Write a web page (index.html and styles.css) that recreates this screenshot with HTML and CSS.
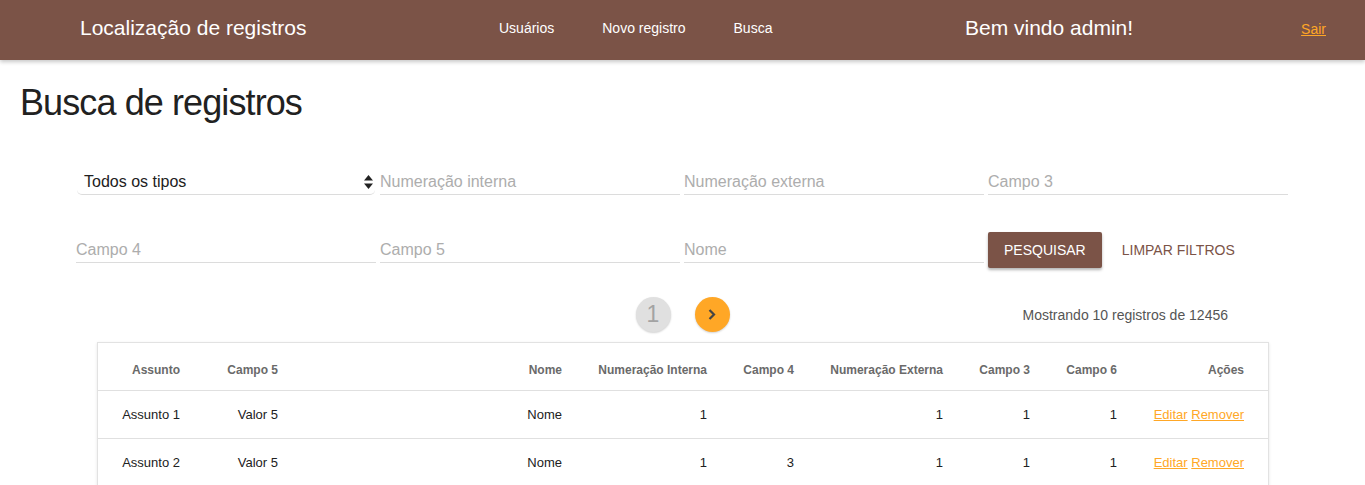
FILE: index.html
```html
<!DOCTYPE html>
<html lang="pt-BR">
<head>
<meta charset="utf-8">
<title>Busca de registros</title>
<link rel="stylesheet" href="styles.css">
</head>
<body>
<nav class="topbar">
  <div class="brand">Localização de registros</div>
  <ul class="nav-links">
    <li><a href="#">Usuários</a></li>
    <li><a href="#">Novo registro</a></li>
    <li><a href="#">Busca</a></li>
  </ul>
  <div class="welcome">Bem vindo admin!</div>
  <a class="logout" href="#">Sair</a>
</nav>

<main>
  <h1 class="page-title">Busca de registros</h1>

  <div class="filters">
    <div class="field select-field">
      <span>Todos os tipos</span>
      <svg class="select-arrows" width="9" height="14" viewBox="0 0 9 14"><polygon points="4.5,0 9,5.5 0,5.5" fill="#222"/><polygon points="0,8.5 9,8.5 4.5,14" fill="#222"/></svg>
    </div>
    <div class="field placeholder">Numeração interna</div>
    <div class="field placeholder">Numeração externa</div>
    <div class="field placeholder">Campo 3</div>

    <div class="field placeholder">Campo 4</div>
    <div class="field placeholder">Campo 5</div>
    <div class="field placeholder">Nome</div>
    <div class="actions">
      <button class="btn">PESQUISAR</button>
      <button class="btn-flat">LIMPAR FILTROS</button>
    </div>
  </div>

  <div class="pager-row">
    <div></div>
    <div class="pager">
      <span class="page-circle page-current">1</span>
      <span class="page-circle page-next">
        <svg width="8" height="11" viewBox="0 0 8 11"><polyline points="1.5,1 6,5.5 1.5,10" fill="none" stroke="#444" stroke-width="2.2"/></svg>
      </span>
    </div>
    <div class="count">Mostrando 10 registros de 12456</div>
  </div>

  <div class="card">
    <table class="results">
      <colgroup>
        <col class="c-assunto"><col class="c-campo5"><col class="c-nome"><col class="c-numint"><col class="c-campo4"><col class="c-numext"><col class="c-campo3"><col class="c-campo6"><col class="c-acoes">
      </colgroup>
      <thead>
        <tr>
          <th>Assunto</th><th>Campo 5</th><th>Nome</th><th>Numeração Interna</th><th>Campo 4</th><th>Numeração Externa</th><th>Campo 3</th><th>Campo 6</th><th class="last">Ações</th>
        </tr>
      </thead>
      <tbody>
        <tr>
          <td>Assunto 1</td><td>Valor 5</td><td>Nome</td><td>1</td><td></td><td>1</td><td>1</td><td>1</td><td class="last"><a href="#">Editar</a> <a href="#">Remover</a></td>
        </tr>
        <tr>
          <td>Assunto 2</td><td>Valor 5</td><td>Nome</td><td>1</td><td>3</td><td>1</td><td>1</td><td>1</td><td class="last"><a href="#">Editar</a> <a href="#">Remover</a></td>
        </tr>
      </tbody>
    </table>
  </div>
</main>
</body>
</html>
```

FILE: styles.css
```css
* { box-sizing: border-box; }

html, body {
  margin: 0;
  padding: 0;
  background: #fff;
  font-family: "Liberation Sans", Arial, sans-serif;
  color: #212121;
}

/* ---------- top bar ---------- */
.topbar {
  height: 60px;
  padding: 0 39px 5px 80px;
  background: #7b5347;
  display: flex;
  align-items: center;
  box-shadow: 0 2px 4px rgba(0, 0, 0, 0.22);
  color: #fff;
}

.brand {
  width: 419px;
  font-size: 21px;
  white-space: nowrap;
}

.nav-links {
  list-style: none;
  margin: 0;
  padding: 0;
  width: 466px;
  display: flex;
  gap: 48px;
}

.nav-links a {
  color: #fff;
  text-decoration: none;
  font-size: 14px;
}

.welcome {
  font-size: 21px;
  white-space: nowrap;
}

.logout {
  margin-left: auto;
  color: #ffa726;
  font-size: 14px;
  text-decoration: underline;
  position: relative;
  top: 1px;
}

/* ---------- title ---------- */
.page-title {
  margin: 23px 0 0 20px;
  font-size: 36px;
  line-height: 40px;
  font-weight: normal;
  letter-spacing: -0.9px;
  color: #212121;
}

/* ---------- filters ---------- */
.filters {
  margin: 46px 0 0 76px;
  display: grid;
  grid-template-columns: repeat(4, 300px);
  column-gap: 4px;
  row-gap: 37px;
  align-items: center;
}

.field {
  height: 26px;
  line-height: 25px;
  font-size: 16px;
  border-bottom: 1px solid #dcdcdc;
  white-space: nowrap;
}

.placeholder {
  color: #adadad;
}

.select-field {
  display: flex;
  align-items: center;
  justify-content: space-between;
  margin-left: 1px;
  margin-right: 1px;
  padding: 0 2px 0 7px;
  color: #212121;
  border-radius: 0 0 5px 5px;
}

.select-arrows {
  display: block;
  flex: none;
}

.actions {
  display: flex;
  align-items: center;
  white-space: nowrap;
}

.btn {
  height: 36px;
  padding: 0 16px;
  border: none;
  border-radius: 2px;
  background: #7b5347;
  color: #fff;
  font-family: inherit;
  font-size: 14px;
  box-shadow: 0 2px 3px rgba(0, 0, 0, 0.3);
}

.btn-flat {
  margin-left: 20px;
  padding: 0;
  border: none;
  background: transparent;
  color: #7b5347;
  font-family: inherit;
  font-size: 14px;
}

/* ---------- pager ---------- */
.pager-row {
  margin-top: 29px;
  display: grid;
  grid-template-columns: 1fr auto 1fr;
  align-items: center;
}

.pager {
  display: flex;
  gap: 24px;
}

.page-circle {
  width: 35px;
  height: 35px;
  border-radius: 50%;
  display: flex;
  align-items: center;
  justify-content: center;
  box-shadow: 0 1px 2px rgba(0, 0, 0, 0.18);
}

.page-current {
  background: #e0e0e0;
  color: #a3a3a3;
  font-size: 23px;
}

.page-next {
  background: #ffa726;
}

.count {
  justify-self: end;
  padding-right: 137px;
  font-size: 14px;
  color: #555;
}

/* ---------- table card ---------- */
.card {
  margin: 10px 0 0 97px;
  width: 1172px;
  border: 1px solid #e2e2e2;
  box-shadow: 0 1px 3px rgba(0, 0, 0, 0.1);
  background: #fff;
}

.results {
  width: 100%;
  table-layout: fixed;
  border-collapse: collapse;
}

.c-assunto { width: 82px; }
.c-campo5 { width: 98px; }
.c-nome { width: 284px; }
.c-numint { width: 145px; }
.c-campo4 { width: 87px; }
.c-numext { width: 149px; }
.c-campo3 { width: 87px; }
.c-campo6 { width: 87px; }
.c-acoes { width: 151px; }

.results th,
.results td {
  height: 48px;
  padding: 1px 0 0;
  text-align: right;
  white-space: nowrap;
}

.results th {
  height: 47px;
  padding-top: 7px;
}

.results tr {
  border-bottom: 1px solid #e0e0e0;
}

.results th {
  font-size: 12px;
  font-weight: bold;
  color: #6a6a6a;
}

.results td {
  font-size: 13px;
  color: #212121;
}

.results .last {
  padding-right: 24px;
}

.results td a {
  color: #ffa726;
  text-decoration: underline;
}
```
